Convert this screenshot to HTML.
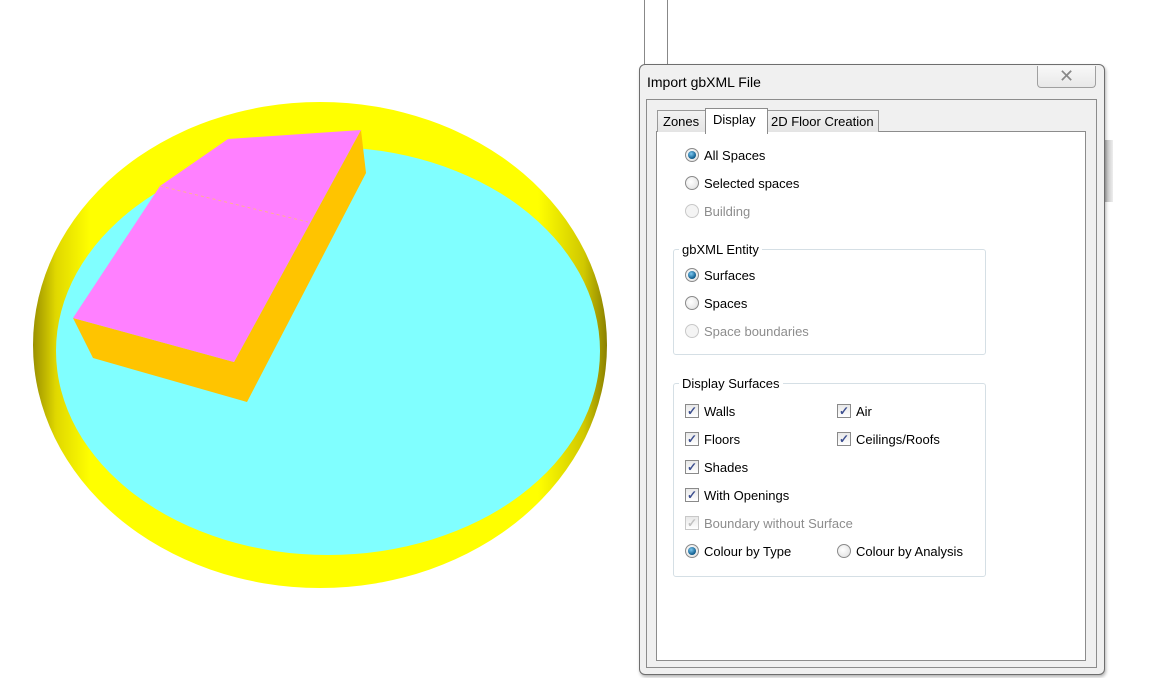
<!DOCTYPE html>
<html><head><style>
body{margin:0;width:1152px;height:678px;background:#fff;position:relative;overflow:hidden;font-family:"Liberation Sans",sans-serif;font-size:13px;color:#000}
.a{position:absolute}
.t{position:absolute;font-size:13px;white-space:nowrap}
.rb{position:absolute;width:12px;height:12px;border-radius:50%;border:1px solid #8a8a8a;background:radial-gradient(circle at 40% 40%,#fff,#ddd)}
.rb.on::after{content:"";position:absolute;left:2px;top:2px;width:8px;height:8px;border-radius:50%;background:radial-gradient(circle at 40% 35%,#7cc7f0,#0d5a8a 70%)}
.rb.dis{border-color:#c8c8c8;background:#f4f4f4}
.cb{position:absolute;width:12px;height:12px;border:1px solid #8a8a8a;background:linear-gradient(#e8e8e8,#fff);font-size:12px;line-height:12px;text-align:center;color:#3d4f8f;font-weight:bold}
.cb.dis{border-color:#c8c8c8;color:#c0c0c0}
.g{position:absolute;border:1px solid #d5dfe5;border-radius:3px}
.gl{position:absolute;background:#fff;padding:0 3px;font-size:13px}
</style></head><body>
<svg class="a" style="left:0;top:0" width="640" height="678">
<defs><linearGradient id="yw" x1="0" x2="1" y1="0" y2="0">
<stop offset="0" stop-color="#9a9000"/><stop offset="0.04" stop-color="#e0d800"/><stop offset="0.1" stop-color="#ffff00"/><stop offset="0.88" stop-color="#ffff00"/><stop offset="0.96" stop-color="#d0c800"/><stop offset="1" stop-color="#8a8000"/></linearGradient></defs>
<ellipse cx="320" cy="345" rx="287" ry="243" fill="url(#yw)"/>
<ellipse cx="328" cy="351" rx="272" ry="204" fill="#80ffff"/>
<polygon points="361,130 366,173 247,402 93,358 73,318 234,362" fill="#ffc400"/>
<polygon points="228,139 361,130 234,362 73,318 160,186" fill="#ff80ff"/>
<line x1="160" y1="186" x2="308" y2="222" stroke="#ffb090" stroke-width="1" stroke-dasharray="3,3"/>
</svg>
<div class="a" style="left:644px;top:0;width:1px;height:66px;background:#888"></div>
<div class="a" style="left:667px;top:0;width:1px;height:66px;background:#888"></div>
<div class="a" style="left:1103px;top:140px;width:10px;height:62px;background:linear-gradient(90deg,#aaa,#eee)"></div>
<div class="a" style="left:639px;top:64px;width:464px;height:609px;background:#f0f0f0;border:1px solid #6e6e6e;border-radius:6px;box-shadow:1px 2px 3px rgba(0,0,0,.3)"></div>
<div class="t" style="left:647px;top:74px;font-size:14px">Import gbXML File</div>
<div class="a" style="left:1037px;top:66px;width:57px;height:21px;border:1px solid #a0a0a0;border-top:none;border-radius:0 0 4px 4px;background:linear-gradient(#f8f8f8,#e8e8e8);text-align:center;font-size:18px;line-height:20px;color:#888">✕</div>
<div class="a" style="left:646px;top:99px;width:449px;height:567px;border:1px solid #8c8c8c;background:#f0f0f0"></div>
<div class="a" style="left:656px;top:131px;width:428px;height:528px;border:1px solid #8c8c8c;background:#fff"></div>
<div class="a" style="left:657px;top:110px;width:47px;height:21px;border:1px solid #999;border-bottom:none;background:linear-gradient(#f2f2f2,#e4e4e4)"></div>
<div class="t" style="left:663px;top:114px">Zones</div>
<div class="a" style="left:767px;top:110px;width:110px;height:21px;border:1px solid #999;border-bottom:none;background:linear-gradient(#f2f2f2,#e4e4e4)"></div>
<div class="t" style="left:771px;top:114px">2D Floor Creation</div>
<div class="a" style="left:705px;top:108px;width:61px;height:25px;border:1px solid #8c8c8c;border-bottom:none;background:#fff"></div>
<div class="t" style="left:713px;top:112px">Display</div>

<div class="rb on" style="left:685px;top:148px"></div><div class="t" style="left:704px;top:148px">All Spaces</div>
<div class="rb" style="left:685px;top:176px"></div><div class="t" style="left:704px;top:176px">Selected spaces</div>
<div class="rb dis" style="left:685px;top:204px"></div><div class="t" style="left:704px;top:204px;color:#8d8d8d">Building</div>

<div class="g" style="left:673px;top:249px;width:311px;height:104px"></div>
<div class="gl" style="left:679px;top:242px">gbXML Entity</div>
<div class="rb on" style="left:685px;top:268px"></div><div class="t" style="left:704px;top:268px">Surfaces</div>
<div class="rb" style="left:685px;top:296px"></div><div class="t" style="left:704px;top:296px">Spaces</div>
<div class="rb dis" style="left:685px;top:324px"></div><div class="t" style="left:704px;top:324px;color:#8d8d8d">Space boundaries</div>

<div class="g" style="left:673px;top:383px;width:311px;height:192px"></div>
<div class="gl" style="left:679px;top:376px">Display Surfaces</div>
<div class="cb" style="left:685px;top:404px">✓</div><div class="t" style="left:704px;top:404px">Walls</div>
<div class="cb" style="left:837px;top:404px">✓</div><div class="t" style="left:856px;top:404px">Air</div>
<div class="cb" style="left:685px;top:432px">✓</div><div class="t" style="left:704px;top:432px">Floors</div>
<div class="cb" style="left:837px;top:432px">✓</div><div class="t" style="left:856px;top:432px">Ceilings/Roofs</div>
<div class="cb" style="left:685px;top:460px">✓</div><div class="t" style="left:704px;top:460px">Shades</div>
<div class="cb" style="left:685px;top:488px">✓</div><div class="t" style="left:704px;top:488px">With Openings</div>
<div class="cb dis" style="left:685px;top:516px">✓</div><div class="t" style="left:704px;top:516px;color:#8d8d8d">Boundary without Surface</div>
<div class="rb on" style="left:685px;top:544px"></div><div class="t" style="left:704px;top:544px">Colour by Type</div>
<div class="rb" style="left:837px;top:544px"></div><div class="t" style="left:856px;top:544px">Colour by Analysis</div>
</body></html>
